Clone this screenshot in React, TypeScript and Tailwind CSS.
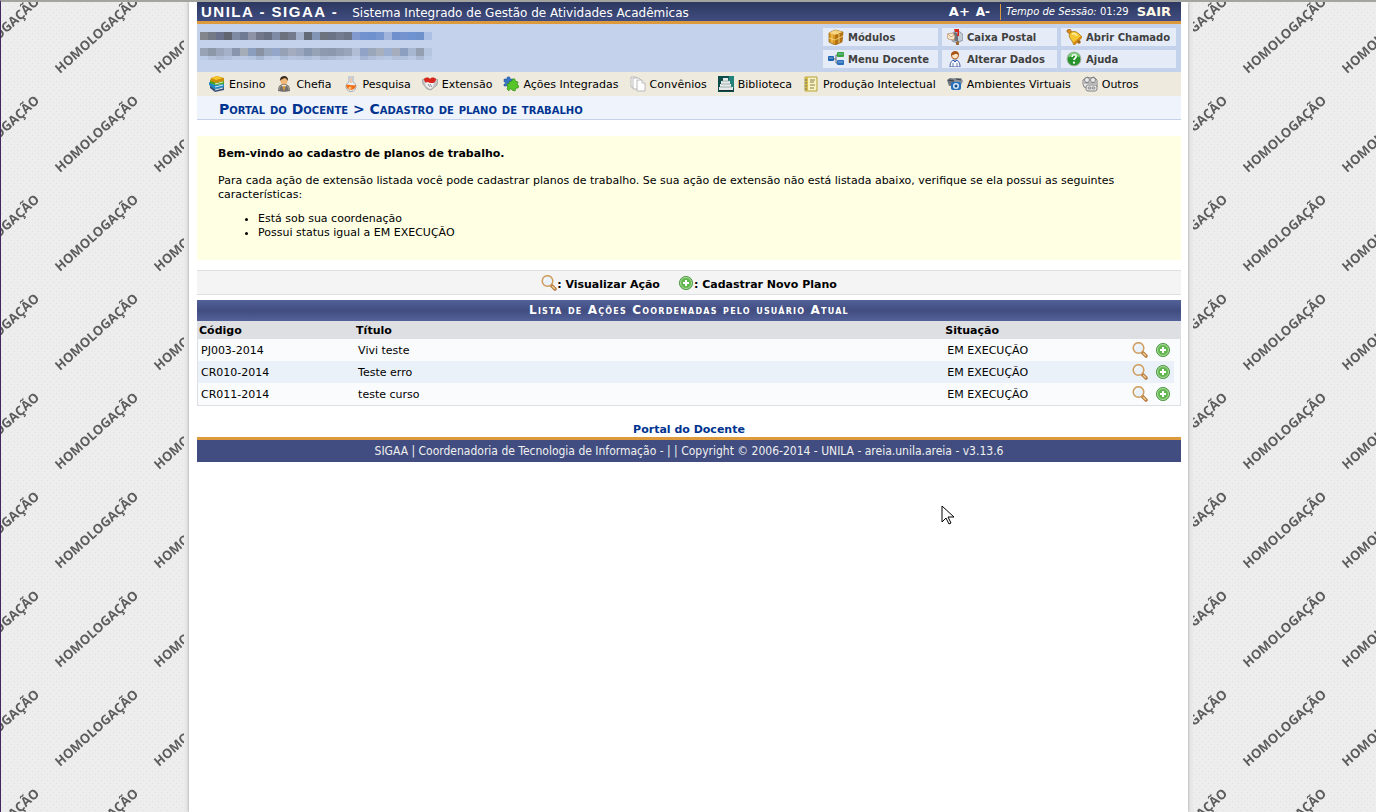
import type { ReactNode } from "react";

function Svg({ children }: { children: ReactNode }) {
  return (
    <svg viewBox="0 0 16 16" className="size-4 shrink-0" aria-hidden="true">
      {children}
    </svg>
  );
}

function BooksIcon() {
  return (
    <Svg>
      <path d="M1 9l5 4 9-2v3l-9 2-5-4z" fill="#33507a" />
      <path d="M6 14l8-2" stroke="#dfe6ee" />
      <path d="M0 6l6 3 9-1v3l-9 2-6-4z" fill="#1c86c4" />
      <path d="M6 11l8-2" stroke="#d9ecf1" />
      <path d="M1 4l5 2 9-1v3L6 9 1 7z" fill="#3fa31e" />
      <path d="M6 8l8-2" stroke="#e2f0d4" />
      <path d="M2 2l6-2 7 2v3L7 7 1 5z" fill="#c98e0c" />
      <path d="M2 2l6-2 6 2-7 2z" fill="#f5c52b" />
    </Svg>
  );
}

function ChiefIcon() {
  return (
    <Svg>
      <path d="M2 15c0-5 2-7 6-7s6 2 6 7c-3 1-9 1-12 0z" fill="#73706c" />
      <path d="M3 14c0-3 2-4 3-5M13 14c0-3-2-4-3-5" fill="none" stroke="#a5a29e" />
      <path d="M6 9h4l-2 5z" fill="#fff" />
      <path d="M8 9l1 2-1 4-1-4z" fill="#e08a13" />
      <circle cx="8" cy="5" r="3.5" fill="#f0b878" />
      <path d="M4 5c-1-6 9-7 8 0-1-2-2-2-3-3-2 1-4 1-5 3z" fill="#3a2a1f" />
    </Svg>
  );
}

function FlaskIcon() {
  return (
    <Svg>
      <path d="M6 1h4v5a5 5 0 1 1-4 0z" fill="#e9eef4" stroke="#a6adb7" />
      <path d="M3 9c3-1 6 1 10 0a5 5 0 1 1-10 0z" fill="#f0701a" />
      <circle cx="7" cy="12" r="1.5" fill="#ffc27a" />
      <path d="M8 2v5" stroke="#f3a364" />
      <path d="M5 1h6" stroke="#c9ced6" strokeWidth="2" />
    </Svg>
  );
}

function HandshakeIcon() {
  return (
    <Svg>
      <path d="M0 4l4-2 4 2 4-2 4 2-1 5-6 5-4-1-4-5z" fill="#c5c5c5" stroke="#8b8b8b" strokeWidth=".6" />
      <path d="M2 3c2-2 5-2 6 0 1-2 4-2 6 0 0 3-3 4-6 6-3-2-6-3-6-6z" fill="#d8261c" />
      <path d="M3 7l3-1 2 1 4 0-1 4-3 2-4-3z" fill="#f1f1f1" />
      <path d="M6 8l2 3M8 8l2 3" stroke="#777" strokeWidth=".8" />
    </Svg>
  );
}

function PuzzleIcon() {
  return (
    <Svg>
      <path d="M1 3h3c-1-3 4-3 3 0h3v7H1V8c2 0 2-2 0-2z" fill="#3573c4" stroke="#245392" strokeWidth=".5" />
      <path d="M6 6l3-1c0-3 4-3 3 0l3 1-1 3c3 0 2 4-1 3l-1 3-3-1c-1-2-3-1-3 1l-2-2 1-3c-2-1-1-3 1-2z" fill="#58c52b" stroke="#2f8b14" strokeWidth=".7" />
    </Svg>
  );
}

function PagesIcon() {
  return (
    <Svg>
      <g fill="#fdfdfd" stroke="#b4b4b4" strokeWidth=".9">
        <path d="M1 1h5l2 2v8H1z" />
        <path d="M3 2h6l2 2v9H3z" />
        <path d="M7 4h5l3 3v8H7z" />
        <path d="M12 4v3h3" />
      </g>
    </Svg>
  );
}

function LibraryIcon() {
  return (
    <Svg>
      <path d="M0 0h16v16H0z" fill="#0d4a4a" />
      <path d="M11 0h5v12H9z" fill="#23807a" />
      <path d="M5 2h5v3H5zM3 5h9v3H3zM2 8h11v3H2zM1 11h14v3H1z" fill="#e7eaea" />
      <path d="M4 5h7M3 8h9M2 11h12" stroke="#8ba19f" strokeWidth=".8" />
      <path d="M1 14.5h14" stroke="#15302f" />
    </Svg>
  );
}

function NotebookIcon() {
  return (
    <Svg>
      <path d="M2 1h12v14H2z" fill="#fbf3bd" stroke="#b3a13a" />
      <path d="M2 1h3v14H2z" fill="#d6bd4c" />
      <path d="M7 4h5M7 6h4M7 9h5M7 12h4" stroke="#857f5e" />
      <path d="M2 4h2M2 7h2M2 10h2M2 13h2" stroke="#6c6c6c" />
    </Svg>
  );
}

function CamerasIcon() {
  return (
    <Svg>
      <path d="M0 4l3-2 7 1v6l-8 1z" fill="#6f757d" />
      <path d="M7 2l7 0 2 3-2 4-7-3z" fill="#8d939b" />
      <path d="M1 4l6 1M9 3l5 1" stroke="#3b4047" />
      <rect x="4" y="6" width="10" height="8" rx="2" fill="#2470bd" />
      <circle cx="9" cy="10" r="3" fill="#dce9f6" />
      <circle cx="9" cy="10" r="1.5" fill="#174b87" />
    </Svg>
  );
}

function OthersIcon() {
  return (
    <Svg>
      <g fill="#ececec" stroke="#777" strokeWidth=".9">
        <path d="M1 4l4-3 3 1 4-1 3 3v7l-5 2-8-2-1-3z" />
        <circle cx="5" cy="4" r="2.5" />
        <circle cx="11" cy="4" r="2.5" />
        <path d="M2 7h12" />
        <rect x="4" y="9" width="11" height="6" rx="2" />
        <rect x="6" y="11" width="3" height="2" rx="1" />
        <rect x="10" y="11" width="3" height="2" rx="1" />
      </g>
    </Svg>
  );
}

function BoxIcon() {
  return (
    <Svg>
      <path d="M1 4l6-3 8 2-1 10-7 3-6-3z" fill="#dc981f" stroke="#8c5b0d" strokeWidth=".7" />
      <path d="M1 4l6-3 8 2-8 3z" fill="#f6d27c" />
      <path d="M7 6l8-3-1 10-7 3z" fill="#b6720f" />
      <path d="M1 9l6 2 8-4M4 5v9M11 5v9M4 3l7 2" fill="none" stroke="#f8dc90" strokeWidth=".8" />
    </Svg>
  );
}

function MailboxIcon() {
  return (
    <Svg>
      <path d="M6 5c0-3 3-4 5-3l2 1c2 1 3 3 3 4v4l-6 3-5-2z" fill="#c3c9d2" stroke="#707a88" strokeWidth=".7" />
      <path d="M6 5c1-3 5-2 5 2v6l-5-2z" fill="#69727f" />
      <path d="M0 5l6-1 2 3-1 4-6-1z" fill="#f7ead7" stroke="#b8875a" strokeWidth=".7" />
      <path d="M1 5l3 3 3-2" fill="none" stroke="#b8875a" strokeWidth=".7" />
      <path d="M11 1h1v6h-2zM7 0h5v3H8z" fill="#d7281d" />
      <path d="M9 13l3-1v4H9z" fill="#9a6a3a" />
    </Svg>
  );
}

function BellIcon() {
  return (
    <Svg>
      <path d="M1 1l3-1 2 3-2 2-3-2z" fill="#d6881b" stroke="#93600f" strokeWidth=".6" />
      <path d="M4 4c4-3 7-1 9 1l3 3-8 8-2-4C4 9 2 7 4 4z" fill="#f5c62f" stroke="#a9740f" strokeWidth=".8" />
      <path d="M6 5c2-1 4 0 5 2" fill="none" stroke="#fff1a5" strokeWidth="1.5" />
      <path d="M7 14l8-7 1 2-7 7z" fill="#d58916" />
      <circle cx="13" cy="13" r="1.7" fill="#9c6410" />
    </Svg>
  );
}

function TreeIcon() {
  return (
    <Svg>
      <path d="M5 8h3V4h2M8 8v4h2" fill="none" stroke="#5f6a76" />
      <rect x="0" y="5" width="6" height="5" rx="1" fill="#1f62ae" />
      <rect x="9" y="1" width="7" height="5" rx="1" fill="#37a53a" />
      <rect x="9" y="9" width="7" height="5" rx="1" fill="#2a6dba" />
      <path d="M10 3h5M1 7h4M10 11h5" stroke="#8fc3ea" strokeWidth=".8" />
    </Svg>
  );
}

function PersonIcon() {
  return (
    <Svg>
      <path d="M3 16c0-5 2-7 5-7s5 2 5 7z" fill="#f7f8fc" stroke="#3f5aa8" />
      <path d="M6 12v4M10 12v4" stroke="#4b5f9d" strokeWidth=".8" />
      <path d="M6 9l2 2 2-2" fill="none" stroke="#2855ad" />
      <circle cx="8" cy="4.5" r="3.5" fill="#fde3c8" stroke="#b5651f" />
      <path d="M4 5c-1-6 9-7 8 0-1-2-2-2-4-2-1 1-3 1-4 2z" fill="#a9561a" />
    </Svg>
  );
}

function HelpIcon() {
  return (
    <Svg>
      <circle cx="8" cy="8" r="7" fill="#28932c" stroke="#b5b9b5" />
      <path d="M3 6c1-4 8-5 10 0" fill="none" stroke="#7bd279" strokeWidth="2" />
      <path d="M6 6c0-3 5-3 4 0 0 1-2 1-2 3" fill="none" stroke="#fff" strokeWidth="1.7" />
      <circle cx="8" cy="11.7" r="1.1" fill="#fff" />
    </Svg>
  );
}

function LensIcon() {
  return (
    <Svg>
      <path d="M10.5 10.5l3.5 3.5" stroke="#b0713a" strokeWidth="3.4" strokeLinecap="round" />
      <path d="M11 11l3 3" stroke="#f0cf8e" strokeWidth="1.6" />
      <circle cx="6.5" cy="6" r="5.3" fill="#e9f1fb" stroke="#cf9c5c" strokeWidth="1.5" />
      <path d="M3.5 6c0-2 1-3 3-3" fill="none" stroke="#fff" />
    </Svg>
  );
}

function AddIcon() {
  return (
    <Svg>
      <circle cx="8" cy="8" r="6.6" fill="#62b650" stroke="#5a9d52" />
      <circle cx="8" cy="8" r="5.5" fill="none" stroke="#b4dfa6" strokeWidth=".9" />
      <path d="M8 5v6M5 8h6" stroke="#fff" strokeWidth="2" />
    </Svg>
  );
}

const shortcuts = [
  { label: "Módulos", icon: <BoxIcon /> },
  { label: "Caixa Postal", icon: <MailboxIcon /> },
  { label: "Abrir Chamado", icon: <BellIcon /> },
  { label: "Menu Docente", icon: <TreeIcon /> },
  { label: "Alterar Dados", icon: <PersonIcon /> },
  { label: "Ajuda", icon: <HelpIcon /> },
];

const menu = [
  { label: "Ensino", icon: <BooksIcon /> },
  { label: "Chefia", icon: <ChiefIcon /> },
  { label: "Pesquisa", icon: <FlaskIcon /> },
  { label: "Extensão", icon: <HandshakeIcon /> },
  { label: "Ações Integradas", icon: <PuzzleIcon /> },
  { label: "Convênios", icon: <PagesIcon /> },
  { label: "Biblioteca", icon: <LibraryIcon /> },
  { label: "Produção Intelectual", icon: <NotebookIcon /> },
  { label: "Ambientes Virtuais", icon: <CamerasIcon /> },
  { label: "Outros", icon: <OthersIcon /> },
];

const actions = [
  { code: "PJ003-2014", title: "Vivi teste", status: "EM EXECUÇÃO" },
  { code: "CR010-2014", title: "Teste erro", status: "EM EXECUÇÃO" },
  { code: "CR011-2014", title: "teste curso", status: "EM EXECUÇÃO" },
];

// censored user name and department, one colour per 8px block
const nameBlocks =
  "#84868d #747a86 #69728a #606570 #7f8ba2 #6f7b93 #8e93a5 #72788a #686f82 #7f8ba5 #6c727e #747b8d #a3b1cc #626977 #8395b5 #6e747e #6b7487 #737c91 #6c7688 #8299cf #7191cf #6f91cd #7896d0 #a1b5dc #6f90cd #7593cf #6f92d0 #6e90cb #abc0e4".split(" ");
const unitBlocks =
  "#98a3b5 #8c97a7 #9ba6bd #a4b1c9 #8995ad #a5adb8 #8b9ebe #8992a2 #97a5bd #94a7cb #97a1b5 #a4adc0 #9aa7bf #8a99b2 #96a2b6 #8d9ab0 #8c98ad #929fb4 #98a5bb #b1bdd5 #91a4c7 #9aa6ba #a8b0bd #9dafd1 #a6aebd #8c9fc1 #a7b6d1 #949fb2 #b5c4df".split(" ");
const unitShadowBlocks =
  "#bccbe6 #b4c2db #adbbd4 #b2c0db #b9c7e1 #bac8e3 #b5c4e0 #a9b8d2 #b8c6e2 #bbcae6 #adbcd8 #b7c4df #b4c2dc #aebdd8 #b6c4de #a9b7d1 #adbbd5 #b4c1da #b8c6e0 #bccae5 #a5b5d4 #b0beda #b7c5de #b8c7e4 #b2c0da #b0c0dd #bac8e3 #adbad3 #bccbe7".split(" ");

function Mosaic({ colors }: { colors: string[] }) {
  return (
    <div className="flex flex-1">
      {colors.map((c, i) => (
        <span key={i} className="w-2" style={{ backgroundColor: c }} />
      ))}
    </div>
  );
}

function Watermark() {
  return (
    <svg className="absolute inset-0 -z-10 h-full w-full" aria-hidden="true">
      <defs>
        <pattern id="dots" width="6" height="6" patternUnits="userSpaceOnUse">
          <rect width="6" height="6" fill="#ededed" />
          <rect x="1" y="1" width="1" height="1" fill="#e0e0e0" />
          <rect x="4" y="4" width="1" height="1" fill="#e0e0e0" />
        </pattern>
        <pattern id="word" x="47" y="-15" width="99" height="99" patternUnits="userSpaceOnUse">
          <text
            transform="translate(12 87) rotate(-42)"
            fontFamily="Open Sans, sans-serif"
            fontWeight="700"
            fontSize="13"
            fill="#5c5c5c"
          >
            HOMOLOGAÇÃO
          </text>
        </pattern>
      </defs>
      <rect width="100%" height="100%" fill="url(#dots)" />
      <rect width="100%" height="100%" fill="url(#word)" />
    </svg>
  );
}

function Header() {
  return (
    <header>
      <div className="flex h-[19px] items-center bg-linear-to-b from-[#2c3860] to-[#414d80] pr-2.5 pl-1 text-white">
        <h1 className="font-[Liberation_Sans] text-[15px] font-bold tracking-widest">UNILA - SIGAA -</h1>
        <span className="ml-3.5 pt-0.5 text-xs">Sistema Integrado de Gestão de Atividades Acadêmicas</span>
        <div className="ml-auto flex items-center text-[10px]">
          <button className="text-[13px] font-bold">A+</button>
          <button className="ml-1.5 text-xs font-bold">A-</button>
          <span className="ml-2.5 border-l border-[#dc9a3c] pl-[5px] leading-4">
            <em>Tempo de Sessão:</em> 01:29
          </span>
          <a href="#sair" className="ml-2 text-[13px] font-bold text-[#fff8e6]">SAIR</a>
        </div>
      </div>
      <div className="flex justify-between border-t-3 border-[#dc9a3c] bg-[#c4d2eb] py-1 pr-[5px] pl-[3px]">
        <div className="pt-1">
          <div className="flex h-2">
            <Mosaic colors={nameBlocks} />
          </div>
          <div className="mt-2 flex h-2">
            <Mosaic colors={unitBlocks} />
          </div>
          <div className="flex h-1">
            <Mosaic colors={unitShadowBlocks} />
          </div>
        </div>
        <div className="grid grid-cols-3 gap-1">
          {shortcuts.map((s) => (
            <a
              key={s.label}
              href="#atalho"
              className="flex h-[18px] w-[115px] items-center gap-1 bg-[#e5ecf8] pl-[5px] text-[10px] font-bold text-[#404040]"
            >
              {s.icon}
              <span className="pt-0.5">{s.label}</span>
            </a>
          ))}
        </div>
      </div>
    </header>
  );
}

export default function App() {
  return (
    <div className="relative isolate min-h-screen overflow-hidden border-t-2 border-l border-t-[#a3a3a0] border-l-[#41285c] font-[DejaVu_Sans,Verdana,sans-serif] text-[11px] leading-[14px] text-black">
      <Watermark />
      <div className="mx-auto min-h-[810px] max-w-[1009px] bg-[#e9e9e9] px-[5px]">
        <div className="min-h-[810px] bg-white pr-[7px] pl-2 shadow-[0_0_3px_#999]">
          <Header />
          <nav className="flex h-6 items-center gap-[11px] bg-[#eeeade] pl-3">
            {menu.map((m) => (
              <a key={m.label} href="#menu" className="flex items-center gap-1 whitespace-nowrap">
                {m.icon}
                <span className="pt-0.5">{m.label}</span>
              </a>
            ))}
          </nav>
          <h2 className="border-b border-[#c4d2eb] bg-[#eff3fb] pt-1.5 pb-0.5 pl-[22px] text-sm leading-[15px] font-bold text-[#003390] [font-variant:small-caps]">
            Portal do Docente &gt; Cadastro de plano de trabalho
          </h2>

          <section className="mt-4 bg-[#ffffe4] px-[21px] pt-[11px] pb-5">
            <p className="font-bold">Bem-vindo ao cadastro de planos de trabalho.</p>
            <p className="mt-[13px]">
              Para cada ação de extensão listada você pode cadastrar planos de trabalho. Se sua ação de extensão não
              está listada abaixo, verifique se ela possui as seguintes características:
            </p>
            <ul className="mt-2.5 list-disc pl-10">
              <li>Está sob sua coordenação</li>
              <li>Possui status igual a EM EXECUÇÃO</li>
            </ul>
          </section>

          <div className="mt-2.5 flex h-[25px] items-center justify-center gap-[18px] border-y border-[#dedfe3] bg-[#f4f4f4] font-bold">
            <span className="flex items-center">
              <LensIcon />
              <span className="pt-1">: Visualizar Ação</span>
            </span>
            <span className="flex items-center">
              <AddIcon />
              <span className="pt-1">: Cadastrar Novo Plano</span>
            </span>
          </div>

          <table className="mt-[5px] w-full border-separate border-spacing-0 border-x border-b border-[#dedfe3] bg-[#f9fbfd] text-left">
            <caption className="h-[21px] bg-linear-to-b from-[#53619a] via-[#414d80] to-[#53619a] text-xs leading-[21px] font-bold tracking-widest text-white [font-variant:small-caps]">
              Lista de Ações Coordenadas pelo usuário Atual
            </caption>
            <thead className="bg-[#dedfe3]">
              <tr className="h-[18px]">
                <th className="w-[16%] pt-0.5 pl-px">Código</th>
                <th className="w-[60%] pt-0.5 pl-px">Título</th>
                <th className="pt-0.5 pl-px">Situação</th>
                <th aria-label="Opções" />
              </tr>
            </thead>
            <tbody>
              {actions.map((a) => (
                <tr key={a.code} className="h-[22px] even:bg-[#ebf1f9]">
                  <td className="pt-0.5 pl-[3px]">{a.code}</td>
                  <td className="pt-0.5 pl-[3px]">{a.title}</td>
                  <td className="pt-0.5 pl-[3px]">{a.status}</td>
                  <td className="border-r-6 border-[#f9fbfd]">
                    <div className="flex justify-end gap-[7px] pr-[3px]">
                      <button aria-label="Visualizar Ação"><LensIcon /></button>
                      <button aria-label="Cadastrar Novo Plano"><AddIcon /></button>
                    </div>
                  </td>
                </tr>
              ))}
            </tbody>
          </table>

          <p className="mt-[17px] text-center">
            <a href="#portal" className="font-bold text-[#003390]">Portal do Docente</a>
          </p>
          <footer className="border-t-3 border-[#dc9a3c] bg-[#414d80] py-1 text-center font-[DejaVu_Sans_Condensed] text-xs leading-[14px] text-[#f0f0f0]">
            SIGAA | Coordenadoria de Tecnologia de Informação - | | Copyright © 2006-2014 - UNILA - areia.unila.areia -
            v3.13.6
          </footer>
        </div>
      </div>
      <svg className="absolute top-[503px] left-[940px] h-5 w-3.5" viewBox="0 0 14 20" aria-hidden="true">
        <path d="M1 1v16l4-4 3 6 2-1-3-6h6z" fill="#fff" stroke="#000" />
      </svg>
    </div>
  );
}
